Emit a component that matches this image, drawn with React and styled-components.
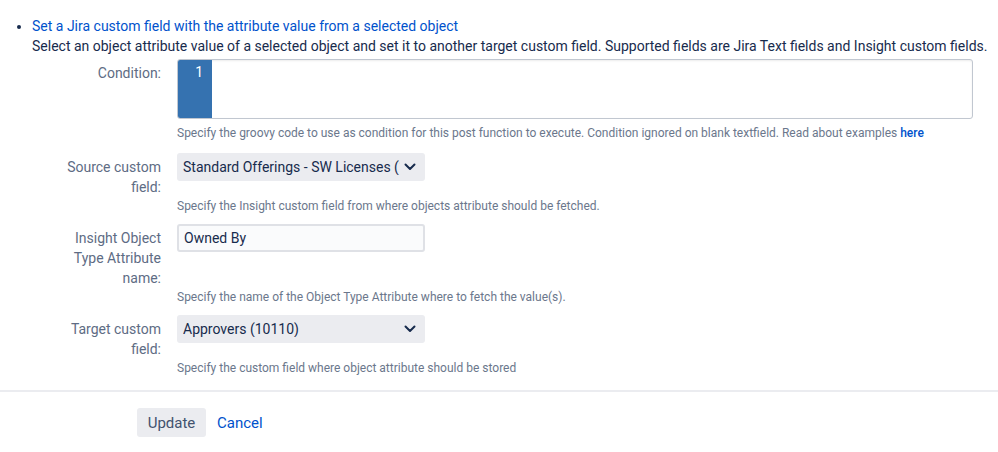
import React from 'react';
import styled, { createGlobalStyle } from 'styled-components';

const GlobalStyle = createGlobalStyle`
  body {
    margin: 0;
    background: #fff;
    font-family: Roboto, "Liberation Sans", sans-serif;
    color: #172b4d;
  }
`;

const Page = styled.div`
  padding-top: 16px;
`;

const List = styled.ul`
  margin: 0;
  padding-left: 32px;
  font-size: 14px;
  line-height: 20px;
  list-style: disc;
`;

const Title = styled.a`
  color: #0052cc;
  text-decoration: none;
`;

const Description = styled.div`
  color: #172b4d;
  white-space: nowrap;
`;

const Form = styled.form`
  margin-top: 3px;
`;

const FieldGroup = styled.div`
  display: grid;
  grid-template-columns: 161px 1fr;
  column-gap: 16px;
  row-gap: 1px;
  margin-bottom: ${(p) => p.gap ?? 10}px;
`;

const Label = styled.label`
  grid-column: 1;
  grid-row: 1;
  padding-top: 4px;
  text-align: right;
  font-size: 14px;
  line-height: 20px;
  color: #5e6c84;
`;

const Control = styled.div`
  grid-column: 2;
  grid-row: 1;
  padding-bottom: 5px;
`;

const Help = styled.div`
  grid-column: 2;
  grid-row: 2;
  font-size: 12px;
  line-height: 16px;
  color: #6b778c;
  a {
    color: #0052cc;
    text-decoration: none;
    font-weight: 500;
  }
`;

const Editor = styled.div`
  width: 796px;
  height: 60px;
  box-sizing: border-box;
  display: flex;
  border: 1px solid #c1c7d0;
  border-radius: 3px;
  box-shadow: inset 0 1px 2px rgba(0, 0, 0, 0.08);
  overflow: hidden;
  background: #fff;
`;

const Gutter = styled.div`
  width: 34px;
  background: #3572b0;
  color: #fff;
  font-size: 14px;
  line-height: 20px;
  text-align: right;
  padding: 2px 9px 0 0;
  box-sizing: border-box;
`;

const Select = styled.div`
  width: 248px;
  height: 28px;
  box-sizing: border-box;
  display: flex;
  align-items: center;
  padding: 0 9px 0 6px;
  background: #ebecf0;
  border-radius: 3px;
  font-size: 14px;
  color: #172b4d;
  gap: 4px;
`;

const SelectText = styled.span`
  flex: 1;
  white-space: nowrap;
  overflow: hidden;
`;

const TextInput = styled.div`
  width: 248px;
  height: 28px;
  box-sizing: border-box;
  display: flex;
  align-items: center;
  padding: 0 5px;
  border: 2px solid #dfe1e6;
  border-radius: 3px;
  background: #fafbfc;
  font-size: 14px;
  color: #172b4d;
`;

const Divider = styled.hr`
  margin: 14px 0 0;
  border: 0;
  border-top: 2px solid #ebecf0;
`;

const Buttons = styled.div`
  display: flex;
  align-items: center;
  gap: 11px;
  padding: 16px 0 0 137px;
`;

const Button = styled.button`
  height: 29px;
  width: 69px;
  border: 0;
  border-radius: 3px;
  background: #ebecf0;
  color: #42526e;
  font-family: inherit;
  font-size: 15px;
`;

const LinkButton = styled.a`
  color: #0052cc;
  font-size: 15px;
  text-decoration: none;
`;

const Chevron = () => (
  <svg width="12" height="12" viewBox="0 0 12 12" fill="none">
    <path d="M1.5 3.5L6 8l4.5-4.5" stroke="#172b4d" strokeWidth="2" strokeLinecap="round" strokeLinejoin="round" />
  </svg>
);

const Field = ({ label, help, children, gap }) => (
  <FieldGroup gap={gap}>
    <Label>{label}</Label>
    <Control>{children}</Control>
    <Help>{help}</Help>
  </FieldGroup>
);

export default function App() {
  return (
    <Page>
      <GlobalStyle />
      <List>
        <li>
          <Title href="#">Set a Jira custom field with the attribute value from a selected object</Title>
          <Description>
            Select an object attribute value of a selected object and set it to another target custom field. Supported fields are Jira Text fields and Insight custom fields.
          </Description>
        </li>
      </List>
      <Form>
        <Field
          label="Condition:"
          gap={12}
          help={
            <>
              Specify the groovy code to use as condition for this post function to execute. Condition ignored on blank textfield. Read about examples <a href="#">here</a>
            </>
          }
        >
          <Editor>
            <Gutter>1</Gutter>
          </Editor>
        </Field>
        <Field
          label={<>Source custom<br />field:</>}
          help="Specify the Insight custom field from where objects attribute should be fetched."
        >
          <Select>
            <SelectText>Standard Offerings - SW Licenses (10200)</SelectText>
            <Chevron />
          </Select>
        </Field>
        <Field
          label={<>Insight Object<br />Type Attribute<br />name:</>}
          help="Specify the name of the Object Type Attribute where to fetch the value(s)."
        >
          <TextInput>Owned By</TextInput>
        </Field>
        <Field
          label={<>Target custom<br />field:</>}
          gap={0}
          help="Specify the custom field where object attribute should be stored"
        >
          <Select>
            <SelectText>Approvers (10110)</SelectText>
            <Chevron />
          </Select>
        </Field>
        <Divider />
        <Buttons>
          <Button type="button">Update</Button>
          <LinkButton href="#">Cancel</LinkButton>
        </Buttons>
      </Form>
    </Page>
  );
}
